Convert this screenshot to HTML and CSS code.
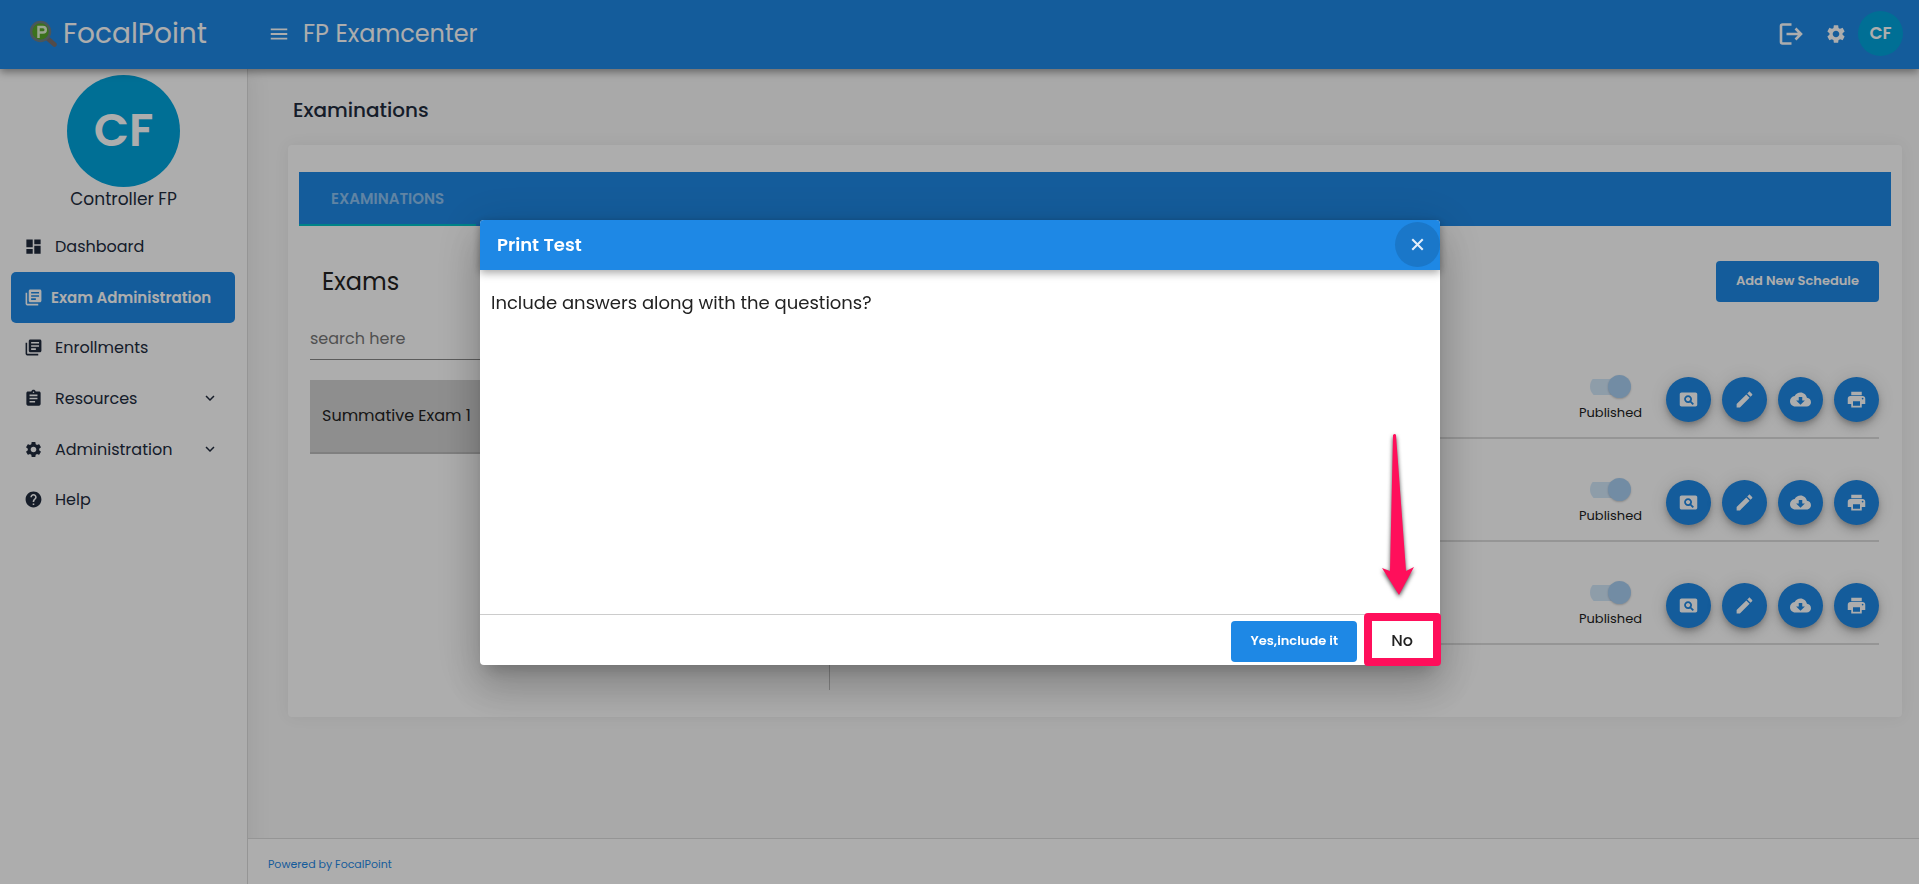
FILE: index.html
```html
<!DOCTYPE html>
<html lang="en">
<head>
<meta charset="utf-8">
<title>FP Examcenter</title>
<link rel="stylesheet" href="styles.css">
</head>
<body>
<svg class="sprite" aria-hidden="true">
  <symbol id="dashboard" viewBox="0 0 24 24"><path d="M3 13h8V3H3v10zm0 8h8v-6H3v6zm10 0h8V11h-8v10zm0-18v6h8V3h-8z"/></symbol>
  <symbol id="library" viewBox="0 0 24 24"><path d="M4 6H2v14c0 1.100.9 2 2 2h14v-2H4V6zm16-4H8c-1.100 0-2 .9-2 2v12c0 1.100.9 2 2 2h12c1.100 0 2-.9 2-2V4c0-1.100-.9-2-2-2zm-1 9H9V9h10v2zm-4 4H9v-2h6v2zm4-8H9V5h10v2z"/></symbol>
  <symbol id="assignment" viewBox="0 0 24 24"><path d="M19 3h-4.180C14.400 1.840 13.300 1 12 1c-1.300 0-2.400.84-2.820 2H5c-1.100 0-2 .9-2 2v14c0 1.100.9 2 2 2h14c1.100 0 2-.9 2-2V5c0-1.100-.9-2-2-2zm-7 0c.55 0 1 .45 1 1s-.45 1-1 1-1-.45-1-1 .45-1 1-1zm2 14H7v-2h7v2zm3-4H7v-2h10v2zm0-4H7V7h10v2z"/></symbol>
  <symbol id="gear" viewBox="0 0 24 24"><path d="M19.140 12.940c.04-.3.060-.61.060-.94 0-.32-.02-.64-.07-.94l2.030-1.580c.18-.14.230-.41.120-.61l-1.920-3.320c-.12-.22-.37-.29-.59-.22l-2.390.96c-.5-.38-1.030-.7-1.620-.94l-.36-2.540c-.04-.24-.24-.41-.48-.41h-3.840c-.24 0-.43.17-.47.41l-.36 2.540c-.59.24-1.130.57-1.620.94l-2.390-.96c-.22-.08-.47 0-.59.22L2.740 8.870c-.12.21-.08.47.12.61l2.030 1.580c-.05.3-.09.63-.09.94s.02.64.070.94l-2.030 1.580c-.18.14-.23.41-.12.61l1.920 3.320c.12.22.37.29.59.22l2.390-.96c.5.38 1.030.7 1.620.94l.36 2.540c.05.24.24.41.48.41h3.840c.24 0 .44-.17.47-.41l.36-2.540c.59-.24 1.130-.56 1.620-.94l2.390.96c.22.08.47 0 .59-.22l1.920-3.320c.12-.22.070-.47-.12-.61l-2.010-1.580zM12 15.600c-1.980 0-3.600-1.620-3.600-3.600s1.620-3.600 3.600-3.600 3.600 1.620 3.600 3.600-1.620 3.600-3.600 3.600z"/></symbol>
  <symbol id="help" viewBox="0 0 24 24"><path d="M12 2C6.480 2 2 6.480 2 12s4.480 10 10 10 10-4.480 10-10S17.520 2 12 2zm1 17h-2v-2h2v2zm2.070-7.750l-.9.920C13.450 12.900 13 13.500 13 15h-2v-.5c0-1.100.45-2.100 1.170-2.830l1.240-1.260c.37-.36.590-.86.590-1.410 0-1.100-.9-2-2-2s-2 .9-2 2H8c0-2.210 1.790-4 4-4s4 1.790 4 4c0 .88-.36 1.680-.93 2.250z"/></symbol>
  <symbol id="chevron" viewBox="0 0 24 24"><path d="M7.410 8.590L12 13.170l4.590-4.580L18 10l-6 6-6-6z"/></symbol>
  <symbol id="menu" viewBox="0 0 24 24"><path d="M3 18h18v-2H3v2zm0-5h18v-2H3v2zm0-7v2h18V6H3z"/></symbol>
  <symbol id="close" viewBox="0 0 24 24"><path d="M6 6l12 12M18 6L6 18" fill="none" stroke="currentColor" stroke-width="2.400"/></symbol>
  <symbol id="preview" viewBox="0 0 24 24"><path d="M11.500 9C10.120 9 9 10.120 9 11.500s1.120 2.500 2.500 2.500 2.500-1.120 2.500-2.500S12.880 9 11.500 9zM20 4H4c-1.100 0-2 .9-2 2v12c0 1.100.9 2 2 2h16c1.100 0 2-.9 2-2V6c0-1.100-.9-2-2-2zm-3.210 14.210l-2.910-2.910c-.69.44-1.510.7-2.390.7C9.010 16 7 13.990 7 11.500S9.010 7 11.500 7 16 9.010 16 11.500c0 .88-.26 1.690-.7 2.390l2.910 2.900-1.420 1.420z"/></symbol>
  <symbol id="edit" viewBox="0 0 24 24"><path d="M3 17.250V21h3.750L17.810 9.940l-3.750-3.750L3 17.250zM20.710 7.040c.39-.39.39-1.020 0-1.410l-2.340-2.340c-.39-.39-1.020-.39-1.410 0l-1.830 1.830 3.750 3.750 1.830-1.830z"/></symbol>
  <symbol id="cloud" viewBox="0 0 24 24"><path d="M19.350 10.040C18.670 6.590 15.640 4 12 4 9.110 4 6.600 5.640 5.350 8.040 2.340 8.360 0 10.910 0 14c0 3.310 2.690 6 6 6h13c2.760 0 5-2.240 5-5 0-2.640-2.050-4.780-4.650-4.960zM17 13l-5 5-5-5h3V9h4v4h3z"/></symbol>
  <symbol id="print" viewBox="0 0 24 24"><path d="M19 8H5c-1.660 0-3 1.340-3 3v6h4v4h12v-4h4v-6c0-1.660-1.340-3-3-3zm-3 11H8v-5h8v5zm3-7c-.55 0-1-.45-1-1s.45-1 1-1 1 .45 1 1-.45 1-1 1zm-1-9H6v4h12V3z"/></symbol>
</svg>

<div class="app">
  <header class="topbar">
    <a class="brand" href="#">
      <svg class="brand-mark" viewBox="0 0 28 28" aria-hidden="true">
        <path d="M18 18l7.500 6.500" stroke="#7a6f6c" stroke-width="4.500" stroke-linecap="round"/>
        <circle cx="11.500" cy="11.500" r="9.500" fill="#57a72a" stroke="#6d7f86" stroke-width="2.500"/>
        <path d="M9.500 18V7h4.500a2.500 2.500 0 0 1 0 5.500H9.500" fill="none" stroke="#e4f3d4" stroke-width="2.500"/>
      </svg>
      <span>FocalPoint</span>
    </a>
    <button class="icon-button" type="button" aria-label="Toggle menu"><svg class="icon-menu"><use href="#menu"/></svg></button>
    <h1 class="app-title">FP Examcenter</h1>
    <div class="top-actions">
      <button class="icon-button" type="button" aria-label="Log out">
        <svg class="icon-logout" viewBox="0 0 24 22" aria-hidden="true"><path d="M12.500 1.500h-9A1.500 1.500 0 0 0 2 3v16a1.500 1.500 0 0 0 1.500 1.500h9M7.500 11H22M16.500 5.500L22 11l-5.500 5.500" fill="none" stroke="currentColor" stroke-width="2.600"/></svg>
      </button>
      <button class="icon-button" type="button" aria-label="Settings"><svg class="icon-settings"><use href="#gear"/></svg></button>
      <button class="avatar avatar-small" type="button">CF</button>
    </div>
  </header>

  <div class="shell">
    <aside class="sidebar">
      <div class="profile">
        <div class="avatar avatar-large">CF</div>
        <div class="profile-name">Controller FP</div>
      </div>
      <nav class="nav">
        <a class="nav-item" href="#"><svg><use href="#dashboard"/></svg><span>Dashboard</span></a>
        <a class="nav-item active" href="#"><svg><use href="#library"/></svg><span>Exam Administration</span></a>
        <a class="nav-item" href="#"><svg><use href="#library"/></svg><span>Enrollments</span></a>
        <a class="nav-item expandable" href="#"><svg><use href="#assignment"/></svg><span>Resources</span><svg class="chevron"><use href="#chevron"/></svg></a>
        <a class="nav-item expandable" href="#"><svg><use href="#gear"/></svg><span>Administration</span><svg class="chevron"><use href="#chevron"/></svg></a>
        <a class="nav-item" href="#"><svg><use href="#help"/></svg><span>Help</span></a>
      </nav>
    </aside>

    <div class="page">
      <main class="content">
        <h2 class="page-title">Examinations</h2>
        <section class="card">
          <div class="tabs"><button class="tab" type="button">EXAMINATIONS</button></div>
          <div class="columns">
            <div class="exams">
              <h3 class="exams-title">Exams</h3>
              <input class="search" type="text" placeholder="search here" aria-label="search here">
              <button class="exam" type="button">Summative Exam 1</button>
            </div>
            <div class="schedules">
              <button class="button add" type="button">Add New Schedule</button>
              <div class="schedule">
                <label class="publish"><input class="switch" type="checkbox" checked disabled><span>Published</span></label>
                <div class="actions">
                  <button class="fab" type="button" aria-label="Preview"><svg><use href="#preview"/></svg></button>
                  <button class="fab" type="button" aria-label="Edit"><svg><use href="#edit"/></svg></button>
                  <button class="fab" type="button" aria-label="Download"><svg><use href="#cloud"/></svg></button>
                  <button class="fab" type="button" aria-label="Print"><svg><use href="#print"/></svg></button>
                </div>
              </div>
              <div class="schedule">
                <label class="publish"><input class="switch" type="checkbox" checked disabled><span>Published</span></label>
                <div class="actions">
                  <button class="fab" type="button" aria-label="Preview"><svg><use href="#preview"/></svg></button>
                  <button class="fab" type="button" aria-label="Edit"><svg><use href="#edit"/></svg></button>
                  <button class="fab" type="button" aria-label="Download"><svg><use href="#cloud"/></svg></button>
                  <button class="fab" type="button" aria-label="Print"><svg><use href="#print"/></svg></button>
                </div>
              </div>
              <div class="schedule">
                <label class="publish"><input class="switch" type="checkbox" checked disabled><span>Published</span></label>
                <div class="actions">
                  <button class="fab" type="button" aria-label="Preview"><svg><use href="#preview"/></svg></button>
                  <button class="fab" type="button" aria-label="Edit"><svg><use href="#edit"/></svg></button>
                  <button class="fab" type="button" aria-label="Download"><svg><use href="#cloud"/></svg></button>
                  <button class="fab" type="button" aria-label="Print"><svg><use href="#print"/></svg></button>
                </div>
              </div>
            </div>
          </div>
        </section>
      </main>
      <footer class="footer"><a href="#">Powered by FocalPoint</a></footer>
    </div>
  </div>
</div>

<div class="backdrop">
  <div class="dialog" role="dialog" aria-modal="true" aria-labelledby="dialog-title">
    <header class="dialog-header">
      <h2 id="dialog-title">Print Test</h2>
      <button class="dialog-close" type="button" aria-label="Close"><svg><use href="#close"/></svg></button>
    </header>
    <p class="dialog-body">Include answers along with the questions?</p>
    <footer class="dialog-footer">
      <button class="button" type="button">Yes,include it</button>
      <button class="button-plain" type="button">No</button>
    </footer>
    <svg class="pointer" viewBox="0 0 34 164" aria-hidden="true"><path d="M12 2q2-2 3 0l10 136 8-4-15 28L1 135l8 3z"/></svg>
    <div class="marker"></div>
  </div>
</div>
</body>
</html>
```
FILE: styles.css
```css
:root {
  --blue: #1e88e5;
  --teal: #00a4dc;
  --ink: #212b3d;
}

* { box-sizing: border-box; }

body {
  margin: 0;
  background: #f9f9f9;
  color: #222;
  font-family: Poppins, Inter, "Open Sans", sans-serif;
  font-size: 16px;
}

h1, h2, h3, p { margin: 0; font-weight: 400; }
a { color: inherit; text-decoration: none; }
button, input { font: inherit; color: inherit; }
button { border: 0; padding: 0; background: none; cursor: pointer; }
svg { fill: currentColor; display: block; flex: none; }
.sprite { position: absolute; width: 0; height: 0; }

.app { min-height: 100vh; display: flex; flex-direction: column; }

.topbar {
  position: relative;
  z-index: 1;
  height: 69px;
  padding: 0 16px 2px 29px;
  display: flex;
  align-items: center;
  background: var(--blue);
  color: #fff;
  box-shadow: 0 3px 8px rgba(0, 0, 0, .4);
}
.brand { width: 239px; display: flex; align-items: center; gap: 6px; font-size: 28px; line-height: 36px; }
.brand-mark { width: 28px; height: 28px; }
.icon-menu { width: 22px; height: 22px; }
.app-title { margin-left: 13px; font-size: 24px; line-height: 32px; }
.top-actions { margin-left: auto; display: flex; align-items: center; }
.icon-logout { width: 24px; height: 22px; margin-right: 22px; }
.icon-settings { width: 22px; height: 22px; margin-right: 11px; }

.avatar {
  display: flex;
  align-items: center;
  justify-content: center;
  border-radius: 50%;
  background: var(--teal);
  color: #fff;
  font-weight: 600;
}
.avatar-small { width: 45px; height: 45px; padding-bottom: 2px; font-size: 17px; }
.avatar-large { width: 113px; height: 112px; padding-bottom: 2px; font-size: 46px; }

.shell { flex: 1; display: flex; }
.sidebar {
  width: 248px;
  flex: none;
  padding-top: 6px;
  border-right: 1px solid #dcdcdc;
  background: #fff;
  box-shadow: 0 0 24px rgba(0, 0, 0, .08);
  color: var(--ink);
}
.profile { display: flex; flex-direction: column; align-items: center; }
.profile-name { font-size: 17px; line-height: 24px; }
.nav { padding: 11px 12px 0 11px; }
.nav-item { height: 50px; padding: 0 13px 1px; display: flex; align-items: center; gap: 12px; border-radius: 5px; }
.nav-item svg { width: 19px; height: 19px; }
.nav-item.active { height: 51px; gap: 8px; background: var(--blue); color: #fff; font-size: 15px; font-weight: 600; }
.nav-item.expandable { height: 51px; }
.nav-item .chevron { width: 18px; height: 18px; margin: 0 3px 0 auto; }

.page { flex: 1; min-width: 0; display: flex; flex-direction: column; }
.content { flex: 1; padding: 25px 17px 0 40px; }
.page-title { padding-left: 5px; color: var(--ink); font-size: 20px; line-height: 32px; font-weight: 500; }
.card {
  margin-top: 19px;
  padding: 27px 11px;
  border-radius: 4px;
  background: #fff;
  box-shadow: 0 0 16px rgba(0, 0, 0, .06);
}
.tabs { display: flex; background: var(--blue); }
.tab {
  padding: 1px 32px 0;
  border-bottom: 2px solid #00c2c8;
  color: rgba(255, 255, 255, .5);
  font-size: 15px;
  font-weight: 600;
  line-height: 51px;
}
.columns { display: flex; }
.exams { width: 33.33%; height: 464px; flex: none; padding: 36px 12px 0 11px; border-right: 1px solid #c4c4c4; }
.exams-title { padding-left: 12px; font-size: 24px; line-height: 40px; }
.search {
  display: block;
  width: 100%;
  height: 40px;
  margin-top: 18px;
  padding: 0 0 2px;
  border: 0;
  border-bottom: 1px solid #888;
  background: none;
}
.search::placeholder { color: #777; opacity: 1; }
.exam {
  display: block;
  width: 100%;
  height: 74px;
  margin-top: 20px;
  padding: 0 12px 2px;
  border-bottom: 2px solid #bcbcbc;
  background: #d2d2d2;
  text-align: left;
}
.schedules { flex: 1; padding: 35px 12px 0; display: flex; flex-direction: column; }
.button {
  height: 41px;
  padding: 0 19px 1px;
  border-radius: 4px;
  background: var(--blue);
  color: #fff;
  font-size: 13px;
  font-weight: 600;
}
.add { align-self: flex-end; margin-bottom: 34px; padding: 0 20px 1px; }
.schedule {
  padding: 39px 0 15px;
  display: flex;
  justify-content: flex-end;
  gap: 24px;
  border-bottom: 2px solid #dcdcdc;
}
.publish { display: flex; flex-direction: column; align-items: center; gap: 5px; font-size: 13px; line-height: 19px; }
.switch {
  appearance: none;
  width: 41px;
  height: 23px;
  margin: 0;
  display: flex;
  align-items: center;
  justify-content: flex-end;
  background: linear-gradient(#d2e7fa, #d2e7fa) left center / 36px 16px no-repeat;
  border-radius: 12px;
}
.switch::after {
  content: "";
  width: 23px;
  height: 23px;
  border-radius: 50%;
  background: #a9cff2;
  box-shadow: 0 1px 2px rgba(0, 0, 0, .2);
}
.actions { padding-top: 2px; display: flex; gap: 11px; }
.fab {
  width: 45px;
  height: 45px;
  display: flex;
  align-items: center;
  justify-content: center;
  border-radius: 50%;
  background: var(--blue);
  color: #fff;
  box-shadow: 0 3px 5px -1px rgba(0, 0, 0, .2), 0 6px 10px rgba(0, 0, 0, .14), 0 1px 18px rgba(0, 0, 0, .12);
}
.fab svg { width: 21px; height: 21px; }

.footer { height: 46px; padding: 0 20px; border-top: 1px solid #dcdcdc; background: #fff; color: var(--blue); font-size: 11px; line-height: 51px; }

.backdrop {
  position: fixed;
  inset: 0;
  z-index: 2;
  display: flex;
  align-items: center;
  justify-content: center;
  padding-left: 1px;
  background: rgba(0, 0, 0, .32);
}
.dialog {
  position: relative;
  width: calc(50% + 1px);
  display: flex;
  flex-direction: column;
  border-radius: 4px;
  background: #fff;
  box-shadow: 0 11px 15px -7px rgba(0, 0, 0, .2), 0 24px 38px 3px rgba(0, 0, 0, .14), 0 9px 46px 8px rgba(0, 0, 0, .12);
}
.dialog-header {
  height: 50px;
  padding: 0 0 0 17px;
  display: flex;
  align-items: center;
  justify-content: space-between;
  border-radius: 4px 4px 0 0;
  background: var(--blue);
  color: #fff;
  box-shadow: 0 3px 8px rgba(0, 0, 0, .35);
}
.dialog-header h2 { font-size: 18px; font-weight: 600; }
.dialog-close {
  width: 45px;
  height: 45px;
  display: flex;
  align-items: center;
  justify-content: center;
  border-radius: 50%;
  background: #1a77c9;
  color: #e4eefa;
}
.dialog-close svg { width: 21px; height: 21px; }
.dialog-body { min-height: 344px; padding: 20px 11px; font-size: 18px; line-height: 26px; }
.dialog-footer {
  padding: 6px 8px 3px;
  display: flex;
  justify-content: flex-end;
  gap: 15px;
  border-top: 1px solid #ccc;
}
.button-plain { width: 60px; height: 41px; padding-bottom: 1px; font-weight: 500; }
.pointer {
  position: absolute;
  right: 25px;
  bottom: 68px;
  width: 34px;
  height: 164px;
  fill: #ff0f5b;
  filter: drop-shadow(0 2px 2px rgba(0, 0, 0, .7));
}
.marker {
  position: absolute;
  right: -1px;
  bottom: -1px;
  width: 77px;
  height: 53px;
  border: 8px solid #ff0f5b;
  border-radius: 4px;
}
```
